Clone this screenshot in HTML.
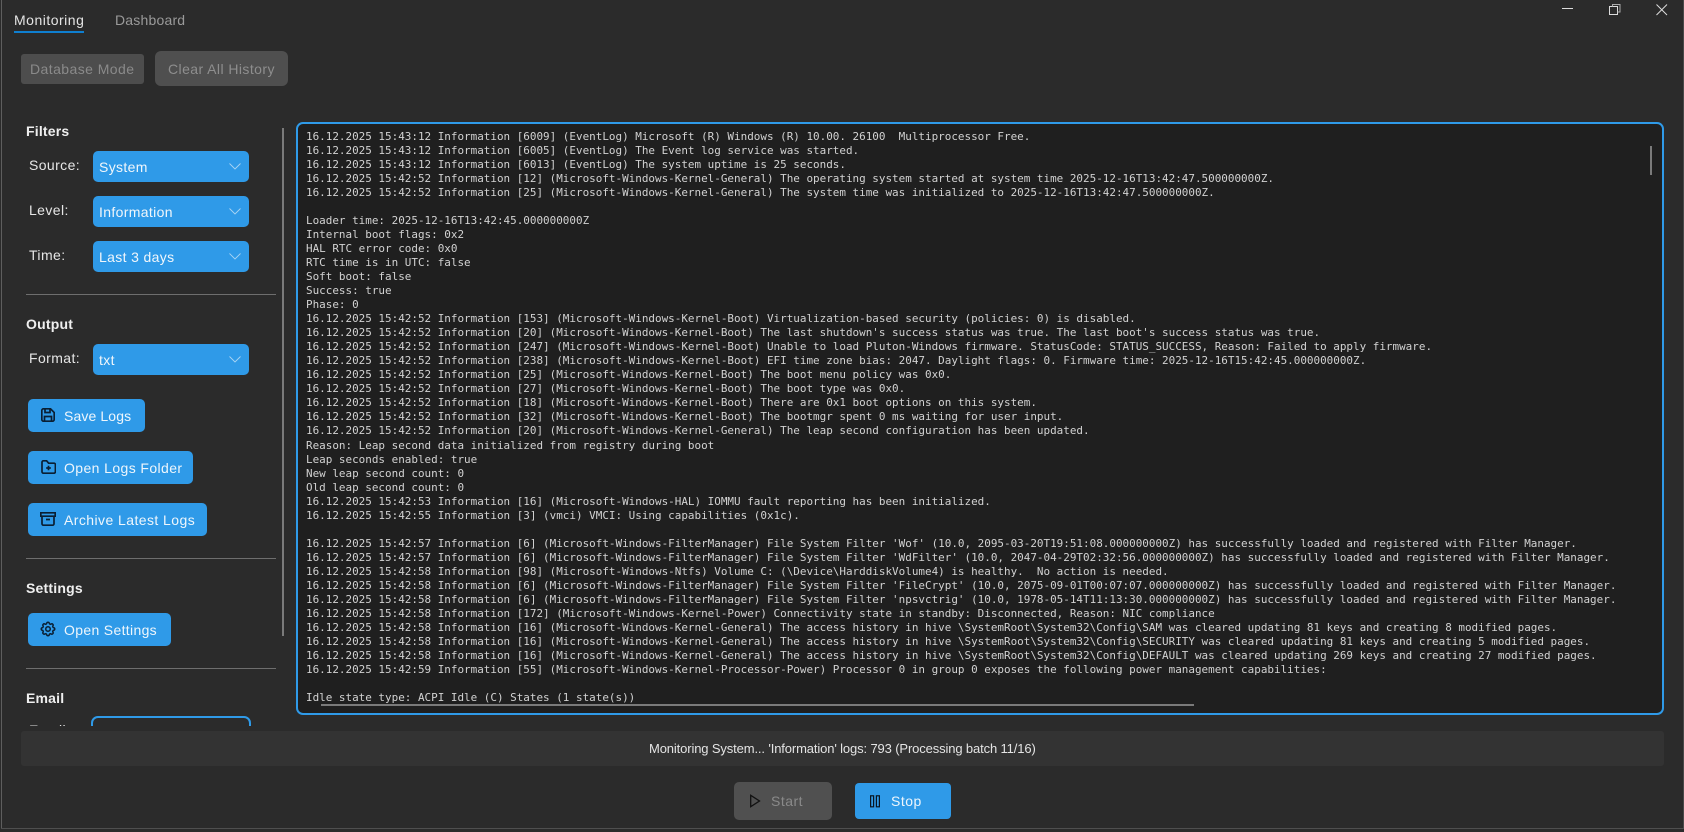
<!DOCTYPE html>
<html><head><meta charset="utf-8"><style>
*{box-sizing:border-box}
html,body{margin:0;padding:0;background:#2b2b2b}
#r{position:relative;width:1684px;height:832px;overflow:hidden;background:#2b2b2b;font-family:"Liberation Sans",sans-serif;color:#e6e6e6}
.a{position:absolute}
.t{position:absolute;white-space:nowrap;font-size:14px;line-height:18px;letter-spacing:.4px}
.b{font-weight:700;color:#efefef;letter-spacing:.2px}
.c{position:absolute;left:93px;width:156px;height:31px;background:#2f9ae8;border-radius:5px;color:#f0f6fb}
.c span{position:absolute;left:6px;top:7px;font-size:14px;line-height:18px;letter-spacing:.35px}
.c svg{position:absolute;left:136px;top:12px}
.bt{position:absolute;left:28px;height:33px;background:#2f9ae8;border-radius:5px;color:#eef6fc}
.bt span{position:absolute;left:36px;top:8px;font-size:14px;line-height:18px;letter-spacing:.33px;white-space:nowrap}
.bt svg{position:absolute}
.d{position:absolute;left:26px;width:250px;height:1px;background:#6e6e6e}
#log{position:absolute;left:296px;top:122px;width:1368px;height:593px;background:#1f1f1f;border:2px solid #2f9ae8;border-radius:7px;overflow:hidden}
#log pre{position:absolute;left:8px;top:5.500px;margin:0;font-family:"DejaVu Sans Mono","Liberation Mono",monospace;font-size:10.955px;line-height:14.04px;color:#d2d2d2}
</style></head><body><div id="r">
<div class="a" style="left:1px;top:0;width:1px;height:829px;background:#5e5e5e"></div>
<div class="a" style="left:1683px;top:0;width:1px;height:829px;background:#4a4a4a"></div>
<div class="a" style="left:1px;top:828px;width:1683px;height:1px;background:#4f4f4f"></div>

<div class="t" style="left:14px;top:11px;color:#e4e4e4;letter-spacing:.5px">Monitoring</div>
<div class="a" style="left:14px;top:31px;width:70px;height:2px;background:#0f7fd0"></div>
<div class="t" style="left:115px;top:11px;color:#9a9a9a;letter-spacing:.2px">Dashboard</div>

<div class="a" style="left:21px;top:54px;width:123px;height:30px;background:#4d4d4d;border-radius:3px"></div>
<div class="t" style="left:30px;top:60px;color:#8a8a8a;letter-spacing:.43px">Database Mode</div>
<div class="a" style="left:155px;top:51px;width:133px;height:35px;background:#4f4f4f;border-radius:6px"></div>
<div class="t" style="left:168px;top:60px;color:#8e8e8e;letter-spacing:.43px">Clear All History</div>

<div class="a" style="left:282px;top:128px;width:2px;height:508px;background:#7a7a7a"></div>

<div class="t b" style="left:26px;top:122px">Filters</div>
<div class="t" style="left:29px;top:156px">Source:</div>
<div class="c" style="top:151px"><span>System</span><svg width="12" height="7" viewBox="0 0 12 7"><path d="M.5.5 6 6l5.500-5.500" fill="none" stroke="#a9d4f3" stroke-width=".9"/></svg></div>
<div class="t" style="left:29px;top:201px">Level:</div>
<div class="c" style="top:196px"><span>Information</span><svg width="12" height="7" viewBox="0 0 12 7"><path d="M.5.5 6 6l5.500-5.500" fill="none" stroke="#a9d4f3" stroke-width=".9"/></svg></div>
<div class="t" style="left:29px;top:246px">Time:</div>
<div class="c" style="top:241px"><span>Last 3 days</span><svg width="12" height="7" viewBox="0 0 12 7"><path d="M.5.5 6 6l5.500-5.500" fill="none" stroke="#a9d4f3" stroke-width=".9"/></svg></div>
<div class="d" style="top:294px"></div>

<div class="t b" style="left:26px;top:315px">Output</div>
<div class="t" style="left:29px;top:349px">Format:</div>
<div class="c" style="top:344px"><span>txt</span><svg width="12" height="7" viewBox="0 0 12 7"><path d="M.5.5 6 6l5.500-5.500" fill="none" stroke="#a9d4f3" stroke-width=".9"/></svg></div>

<div class="bt" style="top:399px;width:117px"><svg style="left:13px;top:9px" width="14" height="14" viewBox="0 0 14 14" fill="none" stroke="#0a1f33" stroke-width="1.700"><path d="M2.500.8h7l3.700 3.700v7a1.700 1.700 0 0 1-1.700 1.700h-9A1.700 1.700 0 0 1 .8 11.500v-9A1.700 1.700 0 0 1 2.500.8z"/><path d="M4 1v3.500h5V1M3.500 13V8.500h7V13"/></svg><span style="letter-spacing:.12px">Save Logs</span></div>
<div class="bt" style="top:451px;width:165px"><svg style="left:13px;top:9px" width="15" height="14" viewBox="0 0 15 14" fill="none" stroke="#0a1f33" stroke-width="1.700"><path d="M1 2.200A1.400 1.400 0 0 1 2.400.8h3.200l2 2.400h5.400a1.400 1.400 0 0 1 1.400 1.400v7.200a1.400 1.400 0 0 1-1.400 1.400H2.400A1.400 1.400 0 0 1 1 11.800z"/><path d="M7.500 5.700v4.600M5.200 8h4.600"/></svg><span style="letter-spacing:.4px">Open Logs Folder</span></div>
<div class="bt" style="top:503px;width:179px"><svg style="left:12px;top:9px" width="16" height="14" viewBox="0 0 16 14" fill="none" stroke="#0a1f33" stroke-width="1.700"><path d="M.8.800h14.400v3.400H.8zM2 4.200v7.600a1.400 1.400 0 0 0 1.400 1.400h9.200a1.400 1.400 0 0 0 1.400-1.400V4.200M6 7.500h4"/></svg><span style="letter-spacing:.43px">Archive Latest Logs</span></div>
<div class="d" style="top:558px"></div>

<div class="t b" style="left:26px;top:579px">Settings</div>
<div class="bt" style="top:613px;width:143px"><svg style="left:11px;top:7px" width="18" height="18" viewBox="0 0 24 24" fill="none" stroke="#0a1f33" stroke-width="2" stroke-linecap="round" stroke-linejoin="round"><path d="M10.325 4.317c.426-1.756 2.924-1.756 3.350 0a1.724 1.724 0 0 0 2.573 1.066c1.543-.940 3.310.826 2.370 2.370a1.724 1.724 0 0 0 1.065 2.572c1.756.426 1.756 2.924 0 3.350a1.724 1.724 0 0 0-1.066 2.573c.940 1.543-.826 3.310-2.370 2.370a1.724 1.724 0 0 0-2.572 1.065c-.426 1.756-2.924 1.756-3.350 0a1.724 1.724 0 0 0-2.573-1.066c-1.543.940-3.310-.826-2.370-2.370a1.724 1.724 0 0 0-1.065-2.572c-1.756-.426-1.756-2.924 0-3.350a1.724 1.724 0 0 0 1.066-2.573c-.940-1.543.826-3.310 2.370-2.370 1 .608 2.296.070 2.572-1.065z"/><circle cx="12" cy="12" r="3"/></svg><span>Open Settings</span></div>
<div class="d" style="top:668px"></div>
<div class="t b" style="left:26px;top:689px">Email</div>
<div class="a" style="left:0;top:716px;width:290px;height:10px;overflow:hidden">
<div class="a" style="left:91px;top:0;width:160px;height:31px;border:2px solid #2f9ae8;border-radius:7px"></div>
<div class="t" style="left:29px;top:5px">Email:</div>
</div>

<div id="log"><pre>16.12.2025 15:43:12 Information [6009] (EventLog) Microsoft (R) Windows (R) 10.00. 26100  Multiprocessor Free.
16.12.2025 15:43:12 Information [6005] (EventLog) The Event log service was started.
16.12.2025 15:43:12 Information [6013] (EventLog) The system uptime is 25 seconds.
16.12.2025 15:42:52 Information [12] (Microsoft-Windows-Kernel-General) The operating system started at system time 2025-12-16T13:42:47.500000000Z.
16.12.2025 15:42:52 Information [25] (Microsoft-Windows-Kernel-General) The system time was initialized to 2025-12-16T13:42:47.500000000Z.

Loader time: 2025-12-16T13:42:45.000000000Z
Internal boot flags: 0x2
HAL RTC error code: 0x0
RTC time is in UTC: false
Soft boot: false
Success: true
Phase: 0
16.12.2025 15:42:52 Information [153] (Microsoft-Windows-Kernel-Boot) Virtualization-based security (policies: 0) is disabled.
16.12.2025 15:42:52 Information [20] (Microsoft-Windows-Kernel-Boot) The last shutdown's success status was true. The last boot's success status was true.
16.12.2025 15:42:52 Information [247] (Microsoft-Windows-Kernel-Boot) Unable to load Pluton-Windows firmware. StatusCode: STATUS_SUCCESS, Reason: Failed to apply firmware.
16.12.2025 15:42:52 Information [238] (Microsoft-Windows-Kernel-Boot) EFI time zone bias: 2047. Daylight flags: 0. Firmware time: 2025-12-16T15:42:45.000000000Z.
16.12.2025 15:42:52 Information [25] (Microsoft-Windows-Kernel-Boot) The boot menu policy was 0x0.
16.12.2025 15:42:52 Information [27] (Microsoft-Windows-Kernel-Boot) The boot type was 0x0.
16.12.2025 15:42:52 Information [18] (Microsoft-Windows-Kernel-Boot) There are 0x1 boot options on this system.
16.12.2025 15:42:52 Information [32] (Microsoft-Windows-Kernel-Boot) The bootmgr spent 0 ms waiting for user input.
16.12.2025 15:42:52 Information [20] (Microsoft-Windows-Kernel-General) The leap second configuration has been updated.
Reason: Leap second data initialized from registry during boot
Leap seconds enabled: true
New leap second count: 0
Old leap second count: 0
16.12.2025 15:42:53 Information [16] (Microsoft-Windows-HAL) IOMMU fault reporting has been initialized.
16.12.2025 15:42:55 Information [3] (vmci) VMCI: Using capabilities (0x1c).

16.12.2025 15:42:57 Information [6] (Microsoft-Windows-FilterManager) File System Filter 'Wof' (10.0, 2095-03-20T19:51:08.000000000Z) has successfully loaded and registered with Filter Manager.
16.12.2025 15:42:57 Information [6] (Microsoft-Windows-FilterManager) File System Filter 'WdFilter' (10.0, 2047-04-29T02:32:56.000000000Z) has successfully loaded and registered with Filter Manager.
16.12.2025 15:42:58 Information [98] (Microsoft-Windows-Ntfs) Volume C: (\Device\HarddiskVolume4) is healthy.  No action is needed.
16.12.2025 15:42:58 Information [6] (Microsoft-Windows-FilterManager) File System Filter 'FileCrypt' (10.0, 2075-09-01T00:07:07.000000000Z) has successfully loaded and registered with Filter Manager.
16.12.2025 15:42:58 Information [6] (Microsoft-Windows-FilterManager) File System Filter 'npsvctrig' (10.0, 1978-05-14T11:13:30.000000000Z) has successfully loaded and registered with Filter Manager.
16.12.2025 15:42:58 Information [172] (Microsoft-Windows-Kernel-Power) Connectivity state in standby: Disconnected, Reason: NIC compliance
16.12.2025 15:42:58 Information [16] (Microsoft-Windows-Kernel-General) The access history in hive \SystemRoot\System32\Config\SAM was cleared updating 81 keys and creating 8 modified pages.
16.12.2025 15:42:58 Information [16] (Microsoft-Windows-Kernel-General) The access history in hive \SystemRoot\System32\Config\SECURITY was cleared updating 81 keys and creating 5 modified pages.
16.12.2025 15:42:58 Information [16] (Microsoft-Windows-Kernel-General) The access history in hive \SystemRoot\System32\Config\DEFAULT was cleared updating 269 keys and creating 27 modified pages.
16.12.2025 15:42:59 Information [55] (Microsoft-Windows-Kernel-Processor-Power) Processor 0 in group 0 exposes the following power management capabilities:

Idle state type: ACPI Idle (C) States (1 state(s))</pre>
<div class="a" style="left:23px;top:580px;width:873px;height:2px;background:#7a7a7a"></div>
<div class="a" style="left:1352px;top:22px;width:2px;height:29px;background:#7a7a7a"></div>
</div>

<div class="a" style="left:21px;top:731px;width:1643px;height:35px;background:#333;border-radius:3px"></div>
<div class="t" style="left:649px;top:740px;font-size:13px;letter-spacing:-.13px;color:#e4e4e4">Monitoring System... 'Information' logs: 793 (Processing batch 11/16)</div>

<div class="a" style="left:734px;top:782px;width:98px;height:38px;background:#505050;border-radius:5px"></div>
<svg class="a" style="left:749px;top:794px" width="12" height="14" viewBox="0 0 12 14"><path d="M1.700 1.300 10.500 7 1.700 12.700z" fill="none" stroke="#111" stroke-width="1.300"/></svg>
<div class="t" style="left:771px;top:792px;color:#8a8a8a;letter-spacing:.5px">Start</div>
<div class="a" style="left:855px;top:783px;width:96px;height:36px;background:#2f9ae8;border-radius:4px"></div>
<svg class="a" style="left:869px;top:795px" width="12" height="13" viewBox="0 0 12 13" fill="none" stroke="#0a1622" stroke-width="1.200"><rect x="1.600" y=".8" width="3" height="11"/><rect x="7.400" y=".8" width="3" height="11"/></svg>
<div class="t" style="left:891px;top:792px;color:#eef6fc;letter-spacing:.5px">Stop</div>

<svg class="a" style="left:1555px;top:0" width="125" height="20" viewBox="0 0 125 20" fill="none" stroke="#dcdcdc" stroke-width="1"><path d="M7 8.500h11"/><rect x="54.500" y="6.500" width="8" height="8"/><path d="M57.500 6.500V4.500h7.500v7.500h-2.500" stroke="#aaa"/><path d="M101.500 4.500l10.500 10.500M112 4.500 101.500 15"/></svg>
</div></body></html>
